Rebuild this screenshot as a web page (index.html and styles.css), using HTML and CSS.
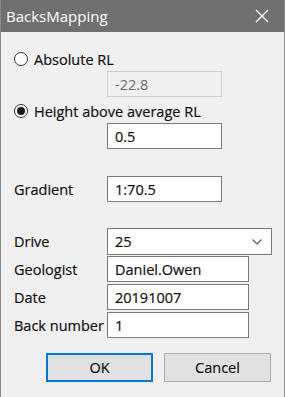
FILE: index.html
```html
<!DOCTYPE html>
<html lang="en">
<head>
    <meta charset="UTF-8">
    <title>BacksMapping</title>
    <link rel="stylesheet" href="styles.css">
</head>
<body>

    <div class="window">
        <div class="titlebar">
            <span class="title">BacksMapping</span>
            <svg class="close" width="14" height="14" viewBox="0 0 14 14">
                <path d="M1 1 L13 13 M13 1 L1 13" stroke="#ffffff" stroke-width="1.3" fill="none"/>
            </svg>
        </div>

        <div class="content">
            <label class="radio-row first">
                <span class="radio"></span>
                <span>Absolute RL</span>
            </label>
            <div class="field-row">
                <div class="input disabled">-22.8</div>
            </div>

            <label class="radio-row second">
                <span class="radio checked"></span>
                <span>Height above average RL</span>
            </label>
            <div class="field-row">
                <div class="input">0.5</div>
            </div>

            <div class="field-row gradient">
                <span class="label">Gradient</span>
                <div class="input">1:70.5</div>
            </div>

            <div class="field-row drive">
                <span class="label">Drive</span>
                <div class="input combo">
                    <span>25</span>
                    <svg width="10" height="6" viewBox="0 0 10 6">
                        <path d="M0.5 0.5 L5 5 L9.5 0.5" stroke="#555" stroke-width="1.1" fill="none"/>
                    </svg>
                </div>
            </div>
            <div class="field-row tight first-tight">
                <span class="label">Geologist</span>
                <div class="input short">Daniel.Owen</div>
            </div>
            <div class="field-row tight">
                <span class="label">Date</span>
                <div class="input short">20191007</div>
            </div>
            <div class="field-row tight">
                <span class="label">Back number</span>
                <div class="input short">1</div>
            </div>

            <div class="buttons">
                <button class="btn default">OK</button>
                <button class="btn">Cancel</button>
            </div>
        </div>
    </div>

</body>
</html>
```

FILE: styles.css
```css
* {
    box-sizing: border-box;
}
body {
    margin: 0;
    font-family: "Open Sans", "Noto Sans", sans-serif;
    font-size: 14.5px;
    color: #111;
    -webkit-text-stroke: 0.2px;
    background-color: #f0f0f0;
}
.window {
    width: 285px;
    height: 397px;
    background-color: #f0f0f0;
    border-left: 1px solid #8a8a8a;
    border-right: 1px solid #8a8a8a;
}
.titlebar {
    height: 32px;
    background-color: #707070;
    color: #ffffff;
    display: flex;
    align-items: center;
    justify-content: space-between;
    padding: 0 15px 0 5px;
    -webkit-text-stroke: 0;
}
.title {
    font-size: 15px;
}
.close {
    display: block;
}
.content {
    padding-left: 13px;
}
.radio-row {
    display: flex;
    align-items: center;
    height: 18px;
    gap: 6px;
}
.radio-row.first {
    margin-top: 18px;
}
.radio-row.second {
    margin-top: 5px;
}
.radio {
    width: 14px;
    height: 14px;
    border: 1px solid #333;
    border-radius: 50%;
    background-color: #fff;
    display: flex;
    align-items: center;
    justify-content: center;
}
.radio.checked::after {
    content: "";
    width: 8px;
    height: 8px;
    border-radius: 50%;
    background-color: #1a1a1a;
}
.field-row {
    display: flex;
    align-items: center;
    margin-top: 3px;
    padding-left: 93px;
    position: relative;
}
.field-row .label {
    position: absolute;
    left: 0;
}
.input {
    width: 115px;
    height: 26px;
    background-color: #fff;
    border: 1px solid #7a7a7a;
    padding: 0 7px;
    display: flex;
    align-items: center;
}
.input.disabled {
    background-color: #f0f0f0;
    border-color: #cccccc;
    color: #6d6d6d;
    -webkit-text-stroke: 0;
}
.field-row.gradient {
    margin-top: 27px;
}
.field-row.drive {
    margin-top: 26px;
}
.input.combo {
    width: 165px;
    height: 27px;
    justify-content: space-between;
    padding-right: 9px;
}
.input.short {
    width: 142px;
}
.field-row.tight {
    margin-top: 2px;
}
.field-row.first-tight {
    margin-top: 1px;
}
.buttons {
    display: flex;
    gap: 11px;
    margin-top: 15px;
    padding-left: 32px;
}
.btn {
    width: 107px;
    height: 29px;
    font-family: inherit;
    font-size: 14.5px;
    background-color: #e1e1e1;
    border: 1px solid #adadad;
    color: #111;
    padding: 0;
}
.btn.default {
    border: 2px solid #0078d7;
}
```
